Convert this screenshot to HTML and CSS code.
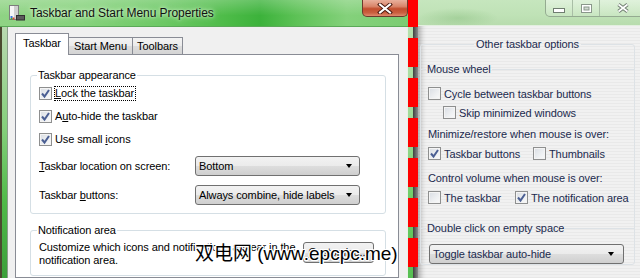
FILE: index.html
```html
<!DOCTYPE html>
<html lang="en">
<head>
    <meta charset="UTF-8">
    <meta name="viewport" content="width=device-width, initial-scale=1.0">
    <title>Taskbar and Start Menu Properties</title>
    <link rel="stylesheet" href="styles.css">
</head>
<body>
<div class="desk">
    <!-- active dialog -->
    <div class="win-left">
        <div class="titlebar">
            <svg class="app-icon" width="17" height="16" viewBox="0 0 17 16">
                <rect x="1.5" y="0.5" width="9" height="14" fill="#f6f6f6" stroke="#7d7d7d"/>
                <rect x="6" y="1" width="4" height="13" fill="#cfcfcf"/>
                <rect x="8.5" y="10.5" width="8" height="4.5" fill="#5b5b5b" stroke="#2f2f2f"/>
                <rect x="2.5" y="11" width="2" height="2" fill="#3c78d8"/>
                <rect x="4.5" y="12.5" width="2" height="2" fill="#d8402f"/>
                <rect x="2.5" y="13" width="2" height="1.5" fill="#3aa53a"/>
            </svg>
            <span class="title">Taskbar and Start Menu Properties</span>
            <div class="close-btn">
                <svg width="16" height="11" viewBox="0 0 16 11">
                    <path d="M3 1.5 L13 9.5 M13 1.5 L3 9.5" stroke="#4a1a10" stroke-width="4" stroke-linecap="square"/>
                    <path d="M3 1.5 L13 9.5 M13 1.5 L3 9.5" stroke="#fff" stroke-width="2" stroke-linecap="square"/>
                </svg>
            </div>
        </div>
        <div class="win-body">
            <div class="frame-l"></div>
            <div class="client">
                <div class="tabs">
                    <div class="tab active">Taskbar</div>
                    <div class="tab start">Start Menu</div>
                    <div class="tab toolbars">Toolbars</div>
                </div>
                <div class="tab-panel">
                    <fieldset class="group appearance">
                        <legend>Taskbar appearance</legend>
                        <div class="check-row">
                            <span class="cb"><svg width="11" height="11" viewBox="0 0 11 11"><path d="M2 5.5 L4.5 8.5 L9 2" fill="none" stroke="#4b5f93" stroke-width="2"/></svg></span>
                            <span class="lbl focus"><u>L</u>ock the taskbar</span>
                        </div>
                        <div class="check-row">
                            <span class="cb"><svg width="11" height="11" viewBox="0 0 11 11"><path d="M2 5.5 L4.5 8.5 L9 2" fill="none" stroke="#4b5f93" stroke-width="2"/></svg></span>
                            <span class="lbl">A<u>u</u>to-hide the taskbar</span>
                        </div>
                        <div class="check-row">
                            <span class="cb"><svg width="11" height="11" viewBox="0 0 11 11"><path d="M2 5.5 L4.5 8.5 L9 2" fill="none" stroke="#4b5f93" stroke-width="2"/></svg></span>
                            <span class="lbl">Use small <u>i</u>cons</span>
                        </div>
                        <div class="select-row first">
                            <span class="field-name"><u>T</u>askbar location on screen:</span>
                            <div class="select">Bottom<span class="arrow"></span></div>
                        </div>
                        <div class="select-row">
                            <span class="field-name">Taskbar <u>b</u>uttons:</span>
                            <div class="select">Always combine, hide labels<span class="arrow"></span></div>
                        </div>
                    </fieldset>

                    <fieldset class="group notify">
                        <legend>Notification area</legend>
                        <div class="notify-row">
                            <p class="notify-text">Customize which icons and notifications appear in the notification area.</p>
                            <div class="button"><u>C</u>ustomize...</div>
                        </div>
                    </fieldset>
                </div>
            </div>
            <div class="frame-r"></div>
        </div>
    </div>

    <div class="shadow"></div>

    <!-- inactive window behind -->
    <div class="win-right">
        <div class="titlebar-r">
            <div class="caption-btns">
                <div class="cap min"><svg width="12" height="5" viewBox="0 0 12 5"><rect x="0.5" y="0.5" width="11" height="4" fill="#fff" stroke="#6f7d70"/></svg></div>
                <div class="cap max"><svg width="11" height="9" viewBox="0 0 11 9"><rect x="0.5" y="0.5" width="10" height="8" fill="#fff" stroke="#8a978b"/><rect x="3" y="3" width="5" height="3" fill="#cfd8cf" stroke="#8a978b"/></svg></div>
                <div class="cap close"><svg width="14" height="10" viewBox="0 0 14 10"><path d="M2.5 1.5 L11.5 8.5 M11.5 1.5 L2.5 8.5" stroke="#6f7d70" stroke-width="3.5"/><path d="M2.5 1.5 L11.5 8.5 M11.5 1.5 L2.5 8.5" stroke="#fff" stroke-width="1.6"/></svg></div>
            </div>
        </div>
        <div class="body-r">
            <fieldset class="opts">
                <legend class="opts-title">Other taskbar options</legend>
                <fieldset class="sub">
                    <legend>Mouse wheel</legend>
                    <div class="opt-row">
                        <span class="cb"></span><span>Cycle between taskbar buttons</span>
                    </div>
                    <div class="opt-row indent">
                        <span class="cb"></span><span>Skip minimized windows</span>
                    </div>
                    <div class="opt-label">Minimize/restore when mouse is over:</div>
                    <div class="opt-row">
                        <div class="opt w-taskbar-btns">
                            <span class="cb"><svg width="11" height="11" viewBox="0 0 11 11"><path d="M2 5.5 L4.5 8.5 L9 2" fill="none" stroke="#4b5f93" stroke-width="2"/></svg></span><span>Taskbar buttons</span>
                        </div>
                        <div class="opt">
                            <span class="cb"></span><span>Thumbnails</span>
                        </div>
                    </div>
                    <div class="opt-label vol">Control volume when mouse is over:</div>
                    <div class="opt-row">
                        <div class="opt w-taskbar">
                            <span class="cb"></span><span>The taskbar</span>
                        </div>
                        <div class="opt">
                            <span class="cb"><svg width="11" height="11" viewBox="0 0 11 11"><path d="M2 5.5 L4.5 8.5 L9 2" fill="none" stroke="#4b5f93" stroke-width="2"/></svg></span><span>The notification area</span>
                        </div>
                    </div>
                </fieldset>
                <fieldset class="sub dbl">
                    <legend>Double click on empty space</legend>
                    <div class="select wide">Toggle taskbar auto-hide<span class="arrow"></span></div>
                </fieldset>
            </fieldset>
        </div>
    </div>

    <div class="dashes"></div>
    <div class="watermark">双电网 (www.epcpc.me)</div>
</div>
</body>
</html>
```

FILE: styles.css
```css
body {
    margin: 0;
    padding: 0;
    font-family: "Liberation Sans", Arial, sans-serif;
    font-size: 11px;
    letter-spacing: -0.1px;
    color: #000;
}
.desk {
    position: relative;
    display: flex;
    width: 640px;
    height: 278px;
    overflow: hidden;
    background: #4a4a30;
}

/* left window */
.win-left {
    flex: 0 0 413px;
    display: flex;
    flex-direction: column;
}
.titlebar {
    height: 26px;
    display: flex;
    align-items: flex-start;
    border-bottom: 1px solid #5aa957;
    background:
        linear-gradient(180deg, rgba(255, 255, 255, 0.22), rgba(255, 255, 255, 0) 60%),
        linear-gradient(90deg, #8fd384 0%, #86d27c 20%, #6cc864 40%, #4dbb48 55%, #3cb23b 63%, #5ec257 72%, #84d17b 84%, #7acc71 100%);
}
.app-icon {
    margin: 5px 0 0 8px;
}
.title {
    margin: 6px 0 0 5px;
    font-size: 12px;
    letter-spacing: -0.05px;
    color: #111;
    text-shadow: 0 0 6px #d9f5d2, 0 0 3px #d9f5d2;
}
.close-btn {
    margin-left: auto;
    margin-right: 5px;
    width: 44px;
    height: 16px;
    display: flex;
    align-items: center;
    justify-content: center;
    border: 1px solid #6b3a2c;
    border-top: none;
    border-radius: 0 0 5px 5px;
    background: linear-gradient(180deg, #e9b09c 0%, #d9856a 40%, #c24e2e 55%, #c9603f 80%, #e08a6c 100%);
}
.win-body {
    flex: 1;
    display: flex;
}
.frame-l {
    width: 5px;
    border-left: 2px solid #4b4a2f;
    border-right: 1px solid #8a9e8a;
    background: linear-gradient(180deg, #b9d9b0 0%, #86cf7c 40%, #4fba48 70%, #3c9f3a 100%);
}
.frame-r {
    width: 5px;
    border-left: 1px solid #e8f3e6;
    background: linear-gradient(180deg, #b7dfae 0%, #9fd996 40%, #6ccb64 70%, #57bf52 100%);
}
.client {
    flex: 1;
    background: #f0f0f0;
    padding: 6px 8px 0 7px;
    display: flex;
    flex-direction: column;
}
.tabs {
    display: flex;
    align-items: flex-end;
    position: relative;
    z-index: 1;
}
.tab {
    box-sizing: border-box;
    height: 17px;
    line-height: 16px;
    margin-left: -1px;
    white-space: nowrap;
    text-align: center;
    border: 1px solid #898c95;
    border-bottom: none;
    background: linear-gradient(180deg, #f3f3f3 0%, #ebebeb 50%, #dddddd 51%, #d4d4d4 100%);
}
.tab.start { width: 65px; }
.tab.toolbars { width: 51px; }
.tab.active {
    margin-left: 0;
    width: 54px;
    height: 22px;
    line-height: 19px;
    background: #fff;
    margin-bottom: -1px;
}
.tab-panel {
    flex: 1;
    background: #fff;
    border: 1px solid #898c95;
    padding: 0 12px 0 14px;
}
fieldset {
    margin: 0;
    min-width: 0;
    border: 1px solid #d5dfe5;
    border-radius: 3px;
}
legend {
    padding: 0 1px;
    line-height: 14px;
}
.group {
    padding: 0 8px 7px 8px;
}
.group legend {
    margin-left: -2px;
}
.appearance {
    margin-top: 13px;
}
.check-row {
    height: 23px;
    display: flex;
    align-items: center;
}
.cb {
    width: 11px;
    height: 11px;
    flex: 0 0 11px;
    border: 1px solid #8e8f8f;
    background: linear-gradient(135deg, #d9dde3 0%, #eef0f2 60%, #fafafa 100%);
    box-shadow: inset 0 0 0 1px #f4f4f4;
}
.cb svg {
    display: block;
}
.check-row .cb {
    margin-right: 2px;
}
.lbl {
    line-height: 13px;
    border: 1px dotted transparent;
}
.lbl.focus {
    border-color: #000;
    padding-right: 1px;
}
.select-row {
    height: 22px;
    display: flex;
    align-items: center;
    margin-top: 7px;
}
.select-row.first {
    margin-top: 4px;
}
.field-name {
    width: 156px;
}
.select {
    position: relative;
    width: 160px;
    height: 18px;
    line-height: 18px;
    padding-left: 3px;
    border: 1px solid #707070;
    border-radius: 3px;
    background: linear-gradient(180deg, #f2f2f2 0%, #ebebeb 50%, #dddddd 51%, #cfcfcf 100%);
}
.arrow {
    position: absolute;
    right: 7px;
    top: 7px;
    width: 0;
    height: 0;
    border-left: 3.5px solid transparent;
    border-right: 3.5px solid transparent;
    border-top: 4px solid #000;
}
.notify {
    margin-top: 9px;
    padding-top: 4px;
    padding-bottom: 8px;
}
.notify-row {
    display: flex;
    align-items: flex-start;
}
.notify-text {
    margin: 0;
    width: 264px;
    line-height: 13px;
}
.button {
    margin-top: 1px;
    width: 69px;
    height: 19px;
    line-height: 19px;
    text-align: center;
    border: 1px solid #707070;
    border-radius: 3px;
    background: linear-gradient(180deg, #f2f2f2 0%, #ebebeb 50%, #dddddd 51%, #cfcfcf 100%);
}

/* separator between windows */
.shadow {
    flex: 0 0 5px;
    background: linear-gradient(90deg, #3f3f3f, #8c8c8c);
}

/* right window */
.win-right {
    flex: 0 0 228px;
    display: flex;
    flex-direction: column;
    color: #1b2a4e;
}
.titlebar-r {
    height: 25px;
    display: flex;
    border-bottom: 1px solid #e3efe0;
    background:
        radial-gradient(ellipse 40px 10px at 40px 18px, rgba(120, 180, 110, 0.35), transparent),
        linear-gradient(180deg, #c6e6be 0%, #bfe2b6 60%, #b8dcae 100%);
}
.caption-btns {
    margin-left: 127px;
    display: flex;
    height: 16px;
    border: 1px solid #94ab91;
    border-top: none;
    border-radius: 0 0 0 5px;
    background: linear-gradient(180deg, rgba(255, 255, 255, 0.45), rgba(255, 255, 255, 0.15));
}
.cap {
    display: flex;
    align-items: center;
    justify-content: center;
    border-left: 1px solid #a9bea6;
}
.cap.min {
    width: 26px;
    border-left: none;
    align-items: flex-end;
    padding-bottom: 3px;
    box-sizing: border-box;
}
.cap.max { width: 26px; }
.cap.close { width: 46px; }
.body-r {
    flex: 1;
    background: repeating-linear-gradient(180deg, #f1f1f1 0 2px, #e9e9e9 2px 3px);
    box-shadow: inset 8px 0 6px -6px rgba(0, 0, 0, 0.35);
    padding-top: 11px;
}
.opts {
    margin-left: 2px;
    width: 213px;
    padding: 0;
    border-color: #dde2e6;
}
.opts-title {
    margin: 0 auto;
    padding: 0 2px;
}
.sub {
    margin-top: 11px;
    padding: 8px 0 0 7px;
    border: none;
    border-top: 1px solid #dde2e6;
    border-radius: 0;
}
.sub legend {
    margin-left: -2px;
}
.opt-row {
    height: 19px;
    display: flex;
    align-items: center;
}
.opt-row .cb,
.opt .cb {
    margin-right: 3px;
}
.opt-row.indent {
    padding-left: 15px;
}
.opt {
    display: flex;
    align-items: center;
}
.w-taskbar-btns { width: 105px; }
.w-taskbar { width: 87px; }
.opt-label {
    height: 19px;
    line-height: 19px;
    margin-top: 3px;
}
.opt-label.vol {
    margin-top: 6px;
}
.sub.dbl {
    margin-top: 14px;
    padding-top: 9px;
}
.select.wide {
    margin-left: 1px;
    width: 190px;
}
.select.wide .arrow {
    right: 9px;
}

/* overlays */
.dashes {
    position: absolute;
    left: 408px;
    top: 0;
    width: 10px;
    height: 278px;
    background: repeating-linear-gradient(180deg, #ff0000 0 27px, transparent 27px 38px, #ff0000 38px 40px);
}
.watermark {
    position: absolute;
    left: 195px;
    top: 243px;
    font-family: "Liberation Sans", "Noto Sans CJK SC", sans-serif;
    font-size: 19px;
    line-height: 22px;
    letter-spacing: 0;
    color: #000;
    text-shadow: 1px 0 0 #fff, -1px 0 0 #fff, 0 1px 0 #fff, 0 -1px 0 #fff,
        1px 1px 0 #fff, -1px -1px 0 #fff, 1px -1px 0 #fff, -1px 1px 0 #fff;
}
```
